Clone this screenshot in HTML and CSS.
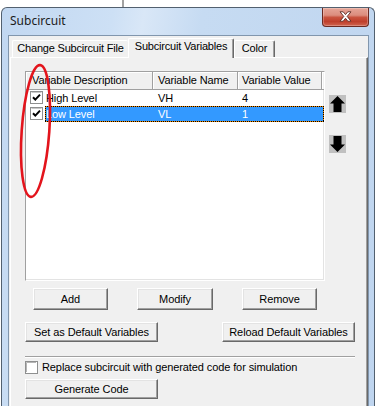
FILE: index.html
```html
<!DOCTYPE html>
<html>
<head>
<meta charset="utf-8">
<title>Subcircuit</title>
<link rel="stylesheet" href="styles.css">
</head>
<body>
<div class="desk">
  <div class="topgap"><div class="guide"></div></div>
  <div class="window">
    <div class="titlebar">
      <span class="title">Subcircuit</span>
      <div class="close">
        <svg width="13" height="11" viewBox="0 0 13 11"><path d="M1 0.8 L4.2 0.8 L6.5 3.6 L8.8 0.8 L12 0.8 L8.2 5.4 L12 10.2 L8.8 10.2 L6.5 7.3 L4.2 10.2 L1 10.2 L4.8 5.4 Z" fill="#fff" stroke="#5e2a22" stroke-width="0.9" stroke-linejoin="round"/></svg>
      </div>
    </div>
    <div class="client">
      <div class="tabs">
        <div class="tab t1">Change Subcircuit File</div>
        <div class="tab t2 sel">Subcircuit Variables</div>
        <div class="tab t3">Color</div>
      </div>
      <div class="panel">
        <div class="listrow">
          <div class="list">
            <div class="lhead">
              <div class="hc c1">Variable Description</div>
              <div class="hc c2">Variable Name</div>
              <div class="hc c3">Variable Value</div>
              <div class="hc rest"></div>
            </div>
            <div class="lrow">
              <div class="ck">
                <svg width="13" height="13" viewBox="0 0 13 13"><rect x="0.5" y="0.5" width="12" height="12" fill="#fff" stroke="#8e8f8f"/><path d="M1.5 1.5 H11.5" stroke="#c8c8c8"/><path d="M3 6.2 L5.3 8.6 L10 3.6" fill="none" stroke="#000" stroke-width="2"/></svg>
              </div>
              <div class="selarea">
                <div class="d1">High Level</div>
                <div class="d2">VH</div>
                <div class="d3">4</div>
              </div>
            </div>
            <div class="lrow">
              <div class="ck">
                <svg width="13" height="13" viewBox="0 0 13 13"><rect x="0.5" y="0.5" width="12" height="12" fill="#fff" stroke="#8e8f8f"/><path d="M1.5 1.5 H11.5" stroke="#c8c8c8"/><path d="M3 6.2 L5.3 8.6 L10 3.6" fill="none" stroke="#000" stroke-width="2"/></svg>
              </div>
              <div class="selarea selected">
                <div class="d1">Low Level</div>
                <div class="d2">VL</div>
                <div class="d3">1</div>
              </div>
            </div>
          </div>
          <div class="movers">
            <svg class="mv up" width="17" height="18" viewBox="0 0 17 18"><rect width="17" height="18" fill="#c0c0c0"/><path d="M8.5 1 L16 8.5 L12.5 8.5 L12.5 17 L4.5 17 L4.5 8.5 L1 8.5 Z" fill="#000"/></svg>
            <svg class="mv down" width="17" height="18" viewBox="0 0 17 18"><rect width="17" height="18" fill="#c0c0c0"/><path d="M8.5 17 L16 9.5 L12.5 9.5 L12.5 1 L4.5 1 L4.5 9.5 L1 9.5 Z" fill="#000"/></svg>
          </div>
        </div>
        <div class="btnrow1">
          <button class="btn w75">Add</button>
          <button class="btn w76">Modify</button>
          <button class="btn w75">Remove</button>
        </div>
        <div class="btnrow2">
          <button class="btn wide">Set as Default Variables</button>
          <button class="btn wide">Reload Default Variables</button>
        </div>
        <div class="sep"></div>
        <div class="checkrow">
          <svg class="box" width="13" height="13" viewBox="0 0 13 13"><rect x="0.5" y="0.5" width="12" height="12" fill="#fff" stroke="#8e8f8f"/><path d="M1.5 11 V1.5 H11" fill="none" stroke="#b5b5b5"/></svg>
          <span class="cklabel">Replace subcircuit with generated code for simulation</span>
        </div>
        <div class="btnrow3">
          <button class="btn wide gen">Generate Code</button>
        </div>
      </div>
    </div>
  </div>
  <svg class="annot" width="379" height="406" viewBox="0 0 379 406">
    <ellipse cx="35.5" cy="131" rx="13.8" ry="66" transform="rotate(4 35.5 131)" fill="none" stroke="#e3141c" stroke-width="2.6"/>
  </svg>
</div>
</body>
</html>
```
FILE: styles.css
```css
* { box-sizing: border-box; }
html, body {
  margin: 0;
  padding: 0;
  background: #fff;
  overflow: hidden;
}
body {
  font-family: "Liberation Sans", Arial, sans-serif;
  font-size: 11px;
  letter-spacing: -0.1px;
  color: #000;
}
.desk {
  position: relative;
  width: 379px;
  height: 406px;
  overflow: hidden;
}
.topgap {
  height: 7px;
  display: flex;
}
.guide {
  width: 2px;
  margin-left: 122px;
  background: #a2a2a2;
}
.window {
  width: 374px;
  height: 430px;
  margin-left: 1px;
  border: 1px solid #52606f;
  border-bottom: none;
  border-radius: 6px 6px 0 0;
  padding: 0 5px 0 6px;
  background: linear-gradient(100deg, #c1d7f1 0%, #cde0f5 25%, #d9e7f7 32%, #c6dbf2 45%, #bfd5ef 100%);
  display: flex;
  flex-direction: column;
}
.titlebar {
  height: 27px;
  display: flex;
  justify-content: space-between;
  align-items: flex-start;
}
.title {
  font-family: "Noto Sans", "Open Sans", sans-serif;
  font-size: 12px;
  letter-spacing: 0;
  color: #1b1b1b;
  margin-left: 2px;
  margin-top: 5px;
  line-height: 16px;
}
.close {
  width: 47px;
  height: 19px;
  border: 1px solid #6b2a22;
  border-top: none;
  border-radius: 0 0 4px 4px;
  background: linear-gradient(#e6a597 0%, #dc8d7e 40%, #c9533f 52%, #bf3f2c 75%, #d06550 100%);
  display: flex;
  align-items: center;
  justify-content: center;
  box-shadow: inset 0 0 0 1px rgba(255,255,255,0.25);
}
.close svg { margin-top: -1px; }
.client {
  flex: 1;
  border: 1px solid #8196ad;
  border-bottom: none;
  background: #f0f0f0;
  padding-top: 2px;
  display: flex;
  flex-direction: column;
}
.tabs {
  height: 20px;
  margin-left: 1px;
  margin-bottom: -1px;
  padding-left: 2px;
  display: flex;
  align-items: flex-end;
  position: relative;
  z-index: 1;
}
.tab {
  height: 17px;
  margin-bottom: 1px;
  border-top: 1px solid #fff;
  border-left: 1px solid #fff;
  border-right: 1px solid #696969;
  box-shadow: inset -1px 0 #a0a0a0;
  border-radius: 2px 2px 0 0;
  background: #f0f0f0;
  text-align: center;
  line-height: 15px;
  white-space: nowrap;
  letter-spacing: -0.2px;
}
.t1 {
  width: 116px;
  border-right: none;
  box-shadow: none;
}
.t2 { width: 106px; }
.t3 { width: 41px; }
.sel {
  height: 20px;
  margin-bottom: 0;
  line-height: 14px;
}
.panel {
  flex: 1;
  margin-left: 1px;
  border-top: 1px solid #fff;
  border-left: 1px solid #fff;
  border-right: 1px solid #696969;
  box-shadow: inset -1px 0 #a0a0a0;
  padding: 13px 12px 0 14px;
}
.listrow {
  display: flex;
  align-items: flex-start;
}
.list {
  width: 300px;
  height: 210px;
  background: #fff;
  border-top: 1px solid #a0a0a0;
  border-left: 1px solid #a0a0a0;
  border-right: 1px solid #fff;
  border-bottom: 1px solid #fff;
  box-shadow: inset -1px -1px #e3e3e3;
}
.lhead {
  display: flex;
  height: 18px;
}
.hc {
  height: 18px;
  background: #f0f0f0;
  border-right: 1px solid #a0a0a0;
  border-bottom: 1px solid #a0a0a0;
  box-shadow: inset 1px 1px #fff;
  line-height: 17px;
  white-space: nowrap;
  overflow: hidden;
}
.hc.c1 { width: 127px; padding-left: 6px; }
.hc.c2 { width: 85px; padding-left: 5px; }
.hc.c3 { width: 84px; padding-left: 4px; }
.hc.rest { flex: 1; border-right: none; }
.lrow {
  display: flex;
  height: 16px;
}
.ck {
  width: 19px;
  padding-left: 4px;
  padding-top: 1px;
}
.ck svg { display: block; }
.selarea {
  flex: 1;
  display: flex;
  line-height: 16px;
  white-space: nowrap;
}
.d1 { width: 108px; padding-left: 1px; }
.d2 { width: 85px; padding-left: 5px; }
.d3 { width: 84px; padding-left: 4px; }
.selected {
  color: #fff;
  background:
    repeating-linear-gradient(90deg, #000 0 1px, #f08a00 1px 2px) top left / 100% 1px no-repeat,
    repeating-linear-gradient(90deg, #000 0 1px, #f08a00 1px 2px) bottom left / 100% 1px no-repeat,
    repeating-linear-gradient(180deg, #000 0 1px, #f08a00 1px 2px) top left / 1px 100% no-repeat,
    repeating-linear-gradient(180deg, #000 0 1px, #f08a00 1px 2px) top right / 1px 100% no-repeat,
    #3399ff;
}
.movers {
  margin-left: 4px;
  margin-top: 24px;
  display: flex;
  flex-direction: column;
  gap: 22px;
}
.mv { display: block; }
.btn {
  font-family: "Liberation Sans", Arial, sans-serif;
  font-size: 11px;
  letter-spacing: -0.1px;
  color: #000;
  background: #f0f0f0;
  border: 1px solid;
  border-color: #fff #696969 #696969 #fff;
  box-shadow: inset -1px -1px #a0a0a0, inset 1px 1px #e3e3e3;
  padding: 0;
  margin: 0;
  text-align: center;
  border-radius: 0;
}
.btnrow1 {
  display: flex;
  gap: 29px;
  margin-top: 7px;
  padding-left: 8px;
}
.btnrow1 .btn { height: 22px; }
.w75 { width: 75px; }
.w76 { width: 76px; }
.btnrow2 {
  display: flex;
  justify-content: space-between;
  margin-top: 12px;
}
.wide { width: 133px; height: 20px; }
.sep {
  height: 2px;
  margin-top: 14px;
  border-top: 1px solid #a0a0a0;
  border-bottom: 1px solid #fff;
}
.checkrow {
  display: flex;
  align-items: center;
  height: 13px;
  margin-top: 3px;
}
.box { display: block; }
.cklabel {
  margin-left: 4px;
  line-height: 13px;
  white-space: nowrap;
}
.btnrow3 {
  display: flex;
  margin-top: 5px;
}
.annot {
  position: absolute;
  left: 0;
  top: 0;
  pointer-events: none;
}
```
